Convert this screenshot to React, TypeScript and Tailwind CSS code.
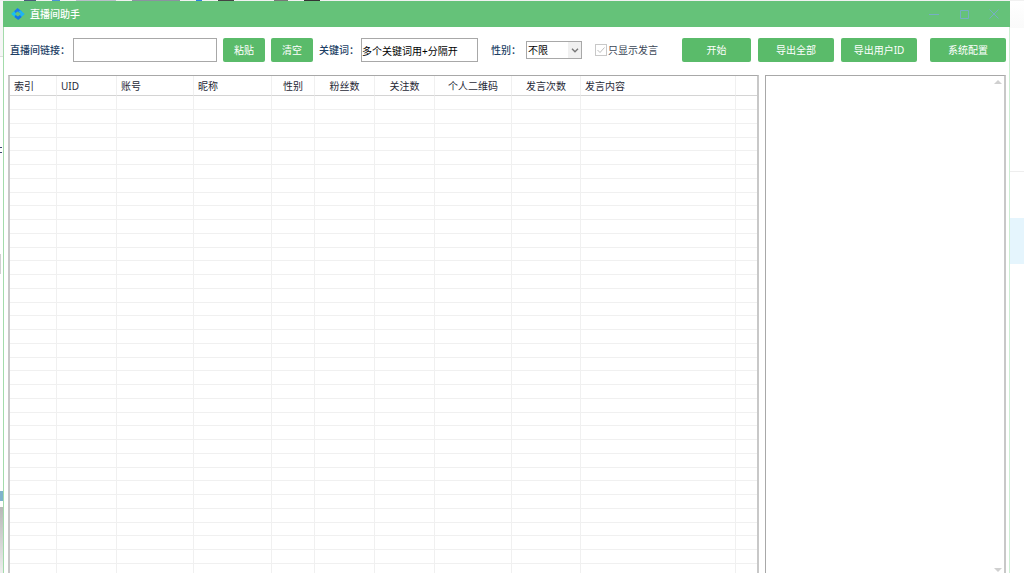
import React, { useState } from "react";

type Column = {
  title: string;
  width: string;
  align: string;
};

const COLUMNS: Column[] = [
  { title: "索引", width: "w-[47px]", align: "text-left" },
  { title: "UID", width: "w-[60px]", align: "text-left" },
  { title: "账号", width: "w-[77px]", align: "text-left" },
  { title: "昵称", width: "w-[78px]", align: "text-left" },
  { title: "性别", width: "w-[43px]", align: "text-center" },
  { title: "粉丝数", width: "w-[60px]", align: "text-center" },
  { title: "关注数", width: "w-[60px]", align: "text-center" },
  { title: "个人二维码", width: "w-[77px]", align: "text-center" },
  { title: "发言次数", width: "w-[69px]", align: "text-center" },
  { title: "发言内容", width: "w-[155px]", align: "text-left" },
  { title: "", width: "w-auto", align: "text-left" },
];

const EMPTY_ROWS = 36;

const GreenButton: React.FC<{ className: string; children: React.ReactNode }> = ({
  className,
  children,
}) => (
  <button
    type="button"
    className={`h-6 shrink-0 rounded-xs bg-[#5abb6a] text-white ${className}`}
  >
    {children}
  </button>
);

const Logo: React.FC = () => (
  <svg viewBox="0 0 14 12" className="h-3 w-[14px]" aria-hidden="true">
    <path d="M6.5 0L11 3.4L9.4 5.2L6.6 3.6L4.4 5.2L3 3.2Z" fill="#1a7df0" />
    <path d="M3 3.2L4.6 5L4.4 6.8L6.6 8.6L5 10.2L0.2 6Z" fill="#18c0f0" />
    <path d="M7.2 12L3.4 9L4.6 7L7 8.4L9.6 6.6L10.8 9Z" fill="#1378ea" />
    <path d="M13.8 6L10.8 8.8L9 7.2L9.6 5.4L7.4 3.8L9.4 2.2Z" fill="#1fb4f2" />
  </svg>
);

const TitleBar: React.FC = () => (
  <header className="flex h-[26px] shrink-0 items-center bg-[#65c279] pr-px pl-2 text-white">
    <Logo />
    <h1 className="ml-[5px] flex-1 text-[10px] font-medium">直播间助手</h1>
    <div className="flex text-[#76aec4]">
      <button type="button" aria-label="最小化" className="flex w-[30px] justify-center">
        <svg viewBox="0 0 10 10" className="size-[10px]" stroke="currentColor" fill="none">
          <path d="M0 5.5H10" />
        </svg>
      </button>
      <button type="button" aria-label="最大化" className="flex w-[30px] justify-center">
        <svg viewBox="0 0 10 10" className="size-[10px]" stroke="currentColor" fill="none">
          <path d="M1.5 1.5H9.5V9.5H1.5Z" />
        </svg>
      </button>
      <button type="button" aria-label="关闭" className="flex w-[30px] justify-center">
        <svg viewBox="0 0 10 10" className="size-[10px]" stroke="currentColor" fill="none">
          <path d="M0.5 0.5L9.5 9.5M9.5 0.5L0.5 9.5" />
        </svg>
      </button>
    </div>
  </header>
);

const Toolbar: React.FC = () => {
  const [link, setLink] = useState<string>("");
  const [keywords, setKeywords] = useState<string>("多个关键词用+分隔开");
  const [gender, setGender] = useState<string>("不限");

  return (
    <div className="flex h-12 shrink-0 items-center pr-[3px] pb-0.5 pl-1.5 text-[#1d3f66]">
      <label htmlFor="link" className="w-[63px] shrink-0 font-medium whitespace-nowrap">
        直播间链接：
      </label>
      <input
        id="link"
        type="text"
        value={link}
        onChange={(e) => setLink(e.target.value)}
        className="h-6 w-36 border border-[#a8a8a8] bg-white px-px text-black"
      />
      <GreenButton className="ml-1.5 w-[42px]">粘贴</GreenButton>
      <GreenButton className="ml-1.5 w-[42px]">清空</GreenButton>

      <label htmlFor="keywords" className="ml-1.5 w-[42px] shrink-0 font-medium whitespace-nowrap">
        关键词：
      </label>
      <input
        id="keywords"
        type="text"
        value={keywords}
        onChange={(e) => setKeywords(e.target.value)}
        className="h-6 w-[117px] border border-[#a8a8a8] bg-white text-black"
      />

      <label htmlFor="gender" className="ml-[13px] w-[35px] shrink-0 font-medium whitespace-nowrap">
        性别：
      </label>
      <div className="relative shrink-0">
        <select
          id="gender"
          value={gender}
          onChange={(e) => setGender(e.target.value)}
          className="block h-[18px] w-14 appearance-none border border-[#a8a8a8] bg-white pl-px text-black"
        >
          <option>不限</option>
          <option>男</option>
          <option>女</option>
        </select>
        <span className="pointer-events-none absolute inset-y-px right-px flex w-[13px] items-center justify-center bg-[#f0f0f0]">
          <svg viewBox="0 0 8 5" className="h-[5px] w-2" fill="none" stroke="#777" strokeWidth="1.4">
            <path d="M1 0.7L4 3.7L7 0.7" />
          </svg>
        </span>
      </div>

      <label className="ml-[13px] flex shrink-0 items-center text-[#3a4656]">
        <span className="relative mr-px size-3">
          <input
            type="checkbox"
            defaultChecked
            disabled
            className="block size-3 appearance-none border border-[#c8c8c8] bg-white"
          />
          <svg
            viewBox="0 0 12 12"
            className="pointer-events-none absolute inset-0 size-3"
            fill="none"
            stroke="#bdbdbd"
          >
            <path d="M2.5 6L5 8.5L9.5 3.5" />
          </svg>
        </span>
        只显示发言
      </label>

      <div className="ml-auto flex shrink-0 gap-[7px]">
        <GreenButton className="w-[69px]">开始</GreenButton>
        <GreenButton className="w-[76px]">导出全部</GreenButton>
        <GreenButton className="w-[76px]">导出用户ID</GreenButton>
        <GreenButton className="ml-1.5 w-[76px]">系统配置</GreenButton>
      </div>
    </div>
  );
};

const UserTable: React.FC = () => (
  <section className="min-w-0 flex-1 overflow-hidden border-x-2 border-t border-x-[#c8c8c8] border-t-[#a8a8a8]">
    <table className="w-full table-fixed border-separate border-spacing-0">
      <thead>
        <tr className="h-5">
          {COLUMNS.map((col, i) => (
            <th
              key={i}
              scope="col"
              className={`border-r border-b border-r-[#f0f0f0] border-b-[#d4d4d4] px-1 py-0 font-normal whitespace-nowrap text-[#1f2937] last:border-r-0 ${col.width} ${col.align}`}
            >
              {col.title}
            </th>
          ))}
        </tr>
      </thead>
      <tbody>
        {Array.from({ length: EMPTY_ROWS }, (_, row) => (
          <tr key={row} className="h-[14px] nth-[4n]:h-[13px]">
            {COLUMNS.map((_col, i) => (
              <td key={i} className="border-r border-b border-[#f0f0f0] p-0 last:border-r-0" />
            ))}
          </tr>
        ))}
      </tbody>
    </table>
  </section>
);

const LogPanel: React.FC = () => (
  <section className="flex w-[241px] shrink-0 border-t border-r-2 border-l border-[#a8a8a8] border-r-[#c8c8c8]">
    <textarea aria-label="日志" className="min-w-0 flex-1 resize-none p-1 outline-none" />
    <div className="flex w-3 flex-col items-center justify-between pt-1 pb-px">
      <svg viewBox="0 0 8 4" className="h-1 w-2" fill="#d0d0d0">
        <path d="M4 0L8 4H0Z" />
      </svg>
      <svg viewBox="0 0 8 4" className="h-1 w-2" fill="#d0d0d0">
        <path d="M0 0H8L4 4Z" />
      </svg>
    </div>
  </section>
);

const App: React.FC = () => {
  return (
    <div className="flex h-screen flex-col overflow-hidden bg-white font-['Noto_Sans','Noto_Sans_CJK_SC',sans-serif] text-[10px] leading-none">
      {/* whatever is open behind the window shows along its edges */}
      <div className="flex h-px shrink-0 gap-4 bg-[#f1f1f1] pl-6">
        <span className="w-3 bg-[#4a5a78]" />
        <span className="w-2 bg-[#4a90d9]" />
        <span className="w-10 bg-[#b8bec8]" />
        <span className="w-12 bg-[#8b93a0]" />
        <span className="w-1.5 bg-[#2f7fe0]" />
        <span className="w-4 bg-[#444444]" />
        <span className="ml-6 w-3.5 bg-[#777777]" />
        <span className="w-4 bg-[#333333]" />
      </div>
      <div className="flex min-h-0 flex-1">
        <div className="flex w-[3px] shrink-0 flex-col bg-white">
          <span className="h-[56px] border-b border-[#dddddd] bg-[#f6f6f6]" />
          <span className="mt-[90px] h-1.5 w-0.5 border-y border-[#3d4a70]" />
          <span className="mt-[101px] h-5 w-px bg-[#d0d0d0]" />
          <span className="mt-[217px] h-2.5 bg-[#7fb3cc]" />
          <span className="mt-1.5 flex-1 bg-linear-to-b from-[#b8b8b8] to-[#eeeeee]" />
        </div>

        <main className="flex min-w-0 flex-1 flex-col bg-white">
          <TitleBar />
          <div className="flex min-h-0 flex-1 flex-col border-r border-l border-r-[#cdeed3] border-l-[#a3dbab]">
            <Toolbar />
            <div className="flex min-h-0 flex-1 gap-1.5 pr-[3px] pl-1">
              <UserTable />
              <LogPanel />
            </div>
          </div>
        </main>

        <div className="flex w-3.5 shrink-0 flex-col bg-white">
          <span className="h-[27px] bg-linear-to-b from-white to-[#fafafa]" />
          <span className="h-[144px] border-b border-[#eeeeee]" />
          <span className="mt-[46px] h-[46px] bg-[#e5f5fd]" />
        </div>
      </div>
    </div>
  );
};

export default App;
